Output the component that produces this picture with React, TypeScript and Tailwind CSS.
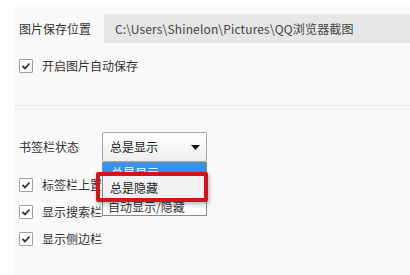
import React from 'react'

const font = { fontFamily: '"Noto Sans CJK SC", "Noto Sans", sans-serif' }

function Check({ label }: { label: string }) {
  return (
    <div className="flex items-center h-[14px]">
      <span className="w-[14px] h-[14px] border border-[#a0a0a0] rounded-[1px] bg-white flex items-center justify-center">
        <svg width="10" height="10" viewBox="0 0 10 10">
          <polyline points="1.5,5 4,7.5 8.5,2.5" fill="none" stroke="#333" strokeWidth="1.8" />
        </svg>
      </span>
      <span className="ml-[9px] text-[12px] text-[#333] whitespace-nowrap">{label}</span>
    </div>
  )
}

export default function App() {
  return (
    <div className="w-[410px] h-[275px] bg-white pl-[14px] pt-[7px] overflow-hidden" style={font}>
      <div className="h-full bg-[#f9f9f9] flex flex-col">
        {/* 保存位置 */}
        <div className="mt-[7px] h-[29px] flex items-center pl-[5px]">
          <span className="w-[85px] text-[12px] text-[#333]">图片保存位置</span>
          <div className="flex-1 h-full bg-[#e6e6e6] flex items-center pl-[11px] text-[12px] tracking-[0.15px] text-[#444] whitespace-nowrap">
            C:\Users\Shinelon\Pictures\QQ浏览器截图
          </div>
        </div>
        <div className="mt-[16px] pl-[5px]">
          <Check label="开启图片自动保存" />
        </div>

        <div className="mt-[32px] h-px bg-[#e4e4e4]" />
        <div className="mt-[3px] h-px bg-[#efefef]" />

        {/* 书签栏 */}
        <div className="mt-[22px] h-[30px] flex items-center pl-[5px] relative">
          <span className="w-[83px] text-[12px] text-[#333]">书签栏状态</span>
          <div className="relative w-[105px] h-full">
            <div className="h-full border border-[#a5a5a5] rounded-[2px] bg-gradient-to-b from-white to-[#eeeeee] flex items-center justify-between pl-[7px] pr-[6px] text-[12px] text-[#222]">
              <span>总是显示</span>
              <svg width="9" height="5" viewBox="0 0 9 5">
                <polygon points="0,0 9,0 4.5,5" fill="#111" />
              </svg>
            </div>
          </div>
        </div>

        <div className="mt-[16px] pl-[5px] flex flex-col gap-[13px]">
          <Check label="标签栏上置顶显示" />
          <Check label="显示搜索栏" />
          <Check label="显示侧边栏" />
        </div>
      </div>

      {/* 下拉列表 */}
      <div className="absolute left-[102px] top-[162px] w-[105px] border border-[#8a8a8a] bg-white text-[12px] z-10">
        <div className="h-[13px] overflow-hidden bg-[#3393f5] text-white pl-[8px] leading-[20px]">总是显示</div>
        <div className="h-[23px] bg-[#f2f2f2] text-[#222] pl-[7px] flex items-center">总是隐藏</div>
        <div className="h-[16px] bg-white text-[#333] pl-[5px] flex items-center leading-none">自动显示/隐藏</div>
      </div>
      <div className="absolute left-[96px] top-[172px] w-[112px] h-[30px] border-[4px] border-[#d3121b] rounded-[2px] shadow-[1px_2px_4px_rgba(0,0,0,0.3)] z-20" />
    </div>
  )
}
